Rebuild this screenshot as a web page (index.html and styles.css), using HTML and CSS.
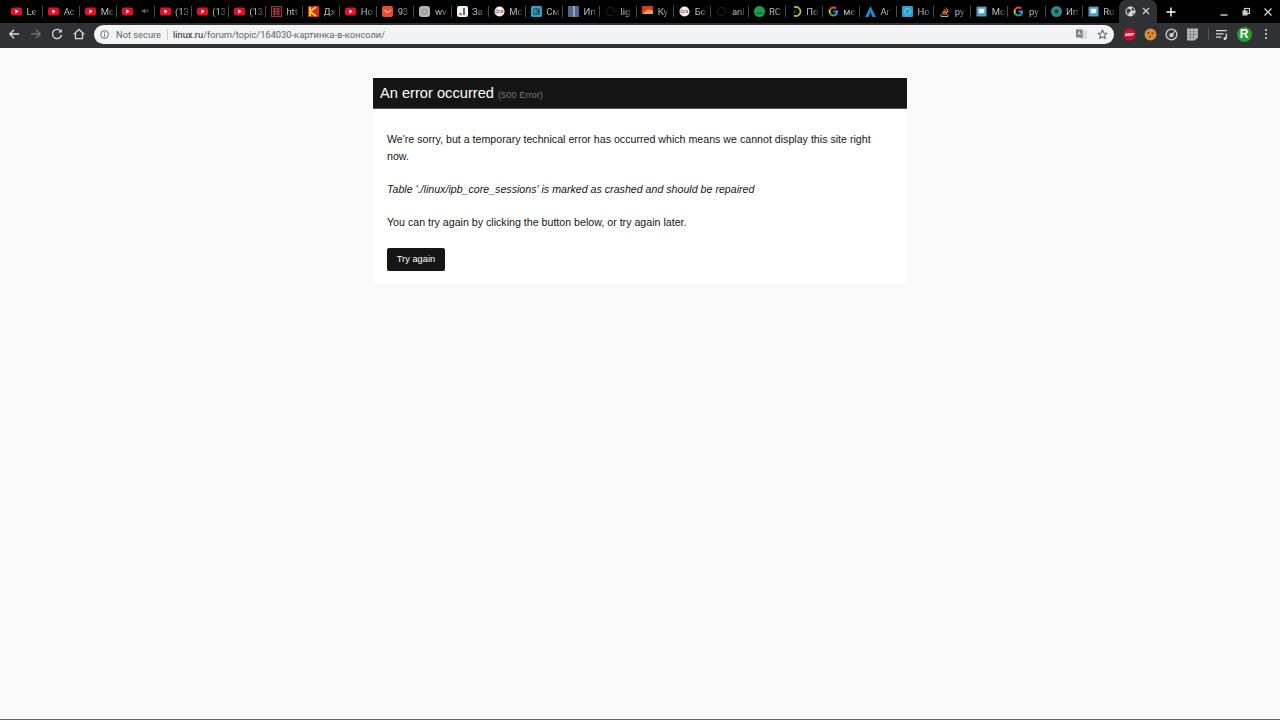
FILE: index.html
```html
<!DOCTYPE html>
<html lang="en">
<head>
<meta charset="utf-8">
<title>An error occurred</title>
<link rel="stylesheet" href="styles.css">
</head>
<body>
<svg class="defs" width="0" height="0" aria-hidden="true">
  <symbol id="yt" viewBox="0 0 11 11"><rect x="0" y="1.500" width="11" height="8" rx="2" fill="#e3102a"/><path d="M4.400 3.600v3.800l3.200-1.900z" fill="#fff"/></symbol>
  <symbol id="g" viewBox="0 0 24 24"><path d="M22 12.200c0-.8-.1-1.500-.2-2.200H12v4.200h5.600c-.2 1.300-1 2.500-2.100 3.200v2.700h3.400c2-1.800 3.100-4.600 3.100-7.900z" fill="#4285f4"/><path d="M12 23c2.900 0 5.300-1 7-2.600l-3.400-2.700c-.9.600-2.100 1-3.600 1-2.800 0-5.100-1.900-6-4.400H2.500v2.700C4.200 20.500 7.800 23 12 23z" fill="#34a853"/><path d="M6 14.300c-.5-1.500-.5-3.100 0-4.600V7H2.500c-1.500 3-1.500 7 0 10z" fill="#fbbc05"/><path d="M12 5.400c1.600 0 3 .5 4.100 1.600l3-3C17.300 2.100 14.900 1 12 1 7.800 1 4.200 3.500 2.500 7L6 9.700c.9-2.500 3.200-4.300 6-4.300z" fill="#ea4335"/></symbol>
  <symbol id="olx" viewBox="0 0 12 12"><circle cx="6" cy="6" r="5.500" fill="#f3f3f3"/><circle cx="3.500" cy="6" r="1.600" fill="none" stroke="#7b5ea7" stroke-width="1"/><path d="M6.300 4v4" stroke="#e8a33d" stroke-width="1"/><path d="M7.600 4.300l2.400 3.400M10 4.300L7.600 7.700" stroke="#d9452e" stroke-width="1"/></symbol>
  <symbol id="ring" viewBox="0 0 12 12"><circle cx="6" cy="6" r="4.500" fill="none" stroke="#1c1c1c" stroke-width="1.200"/></symbol>
  <symbol id="msg" viewBox="0 0 12 12"><rect x="0.500" y="0.500" width="11" height="11" rx="1.500" fill="#4f9ec4"/><path d="M3 3h6v4.500H6L4.500 9V7.500H3z" fill="#eef6fa"/></symbol>
</svg>

<header class="chrome">
  <div class="tabstrip">
    <div class="tab"><svg class="fav"><use href="#yt"/></svg><span class="tab-title">Le</span></div>
    <div class="tab"><svg class="fav"><use href="#yt"/></svg><span class="tab-title">Ac</span></div>
    <div class="tab"><svg class="fav"><use href="#yt"/></svg><span class="tab-title">Mc</span></div>
    <div class="tab"><svg class="fav"><use href="#yt"/></svg><svg class="mute" viewBox="0 0 10 10"><path d="M1 4h2l2.500-2v6L3 6H1z" fill="#777"/><path d="M7 3.500v3M8.500 2.500v5" stroke="#555"/></svg></div>
    <div class="tab"><svg class="fav"><use href="#yt"/></svg><span class="tab-title">(13</span></div>
    <div class="tab"><svg class="fav"><use href="#yt"/></svg><span class="tab-title">(13</span></div>
    <div class="tab"><svg class="fav"><use href="#yt"/></svg><span class="tab-title">(13</span></div>
    <div class="tab"><svg class="fav" viewBox="0 0 11 11"><rect x="0.500" y="0.500" width="10" height="10" fill="#2b0d0d" stroke="#a33"/><path d="M2 3h7M2 5.500h7M2 8h7M3.500 2v7M7 2v7" stroke="#c55" stroke-width=".7"/></svg><span class="tab-title">htt</span></div>
    <div class="tab"><svg class="fav" viewBox="0 0 11 11"><rect width="11" height="11" fill="#d32f1b"/><path d="M2 1v9M2 5.500L8 1M2 5.500L8 10" stroke="#ffd23a" stroke-width="1.800" fill="none"/></svg><span class="tab-title">Дх</span></div>
    <div class="tab"><svg class="fav"><use href="#yt"/></svg><span class="tab-title">Но</span></div>
    <div class="tab"><svg class="fav" viewBox="0 0 11 11"><rect width="11" height="11" rx="2" fill="#ee4d2d"/><path d="M3 4c.5 3 4.500 3 5 0" fill="none" stroke="#fff"/></svg><span class="tab-title">93</span></div>
    <div class="tab"><svg class="fav" viewBox="0 0 11 11"><rect width="11" height="11" rx="3" fill="#b5b5b5"/><circle cx="5.500" cy="5.500" r="2.500" fill="none" stroke="#888"/></svg><span class="tab-title">wv</span></div>
    <div class="tab"><svg class="fav" viewBox="0 0 11 11"><rect width="11" height="11" rx="2" fill="#f5f5f5"/><path d="M7 2v7" stroke="#223a8a" stroke-width="1.500"/><circle cx="3.500" cy="8" r="1.200" fill="#d8332b"/></svg><span class="tab-title">За</span></div>
    <div class="tab"><svg class="fav"><use href="#olx"/></svg><span class="tab-title">Мс</span></div>
    <div class="tab"><svg class="fav" viewBox="0 0 11 11"><rect width="11" height="11" rx="1.500" fill="#2aa5c9"/><rect x="2.500" y="2.500" width="6" height="6" fill="#0f2f3a"/><path d="M4 3v5M7.500 3L4.500 5.500 7.500 8" stroke="#4fd0ea" fill="none"/></svg><span class="tab-title">См</span></div>
    <div class="tab"><svg class="fav" viewBox="0 0 11 11"><rect width="11" height="11" fill="#4d6a8a"/><rect x="5" width="2" height="11" fill="#90a6bc"/></svg><span class="tab-title">Ип</span></div>
    <div class="tab"><svg class="fav"><use href="#ring"/></svg><span class="tab-title">lig</span></div>
    <div class="tab"><svg class="fav" viewBox="0 0 11 11"><rect width="11" height="8" fill="#d9381e"/><path d="M0 8l6-5 5 2v3z" fill="#f2a23a"/></svg><span class="tab-title">Ку</span></div>
    <div class="tab"><svg class="fav"><use href="#olx"/></svg><span class="tab-title">Бо</span></div>
    <div class="tab"><svg class="fav"><use href="#ring"/></svg><span class="tab-title">anl</span></div>
    <div class="tab"><svg class="fav" viewBox="0 0 11 11"><circle cx="5.500" cy="5.500" r="5.500" fill="#1f9d4d"/><path d="M2.500 6.500c2 1.500 4 1.500 6 0" stroke="#0a4a22" fill="none"/></svg><span class="tab-title">RC</span></div>
    <div class="tab"><svg class="fav" viewBox="0 0 11 11"><path d="M3 1.500a4.500 4.500 0 1 1 0 8" fill="none" stroke="#9ccc3c" stroke-width="1.800"/><path d="M3 4a2 2 0 0 1 0 3.500" fill="none" stroke="#5a8a20"/></svg><span class="tab-title">По</span></div>
    <div class="tab"><svg class="fav" viewBox="0 0 24 24"><use href="#g"/></svg><span class="tab-title">ме</span></div>
    <div class="tab"><svg class="fav" viewBox="0 0 11 11"><path d="M5.500 0L11 11H7.500L5.500 6 3.500 11H0z" fill="#1a8ccf"/></svg><span class="tab-title">Ar</span></div>
    <div class="tab"><svg class="fav" viewBox="0 0 11 11"><rect width="11" height="11" rx="1" fill="#2f9fd0"/><circle cx="5.500" cy="5.500" r="3" fill="none" stroke="#d7f0fa" stroke-dasharray="1 1"/></svg><span class="tab-title">Но</span></div>
    <div class="tab"><svg class="fav" viewBox="0 0 11 11"><path d="M2 8.500v2h7v-2" fill="none" stroke="#aaa"/><path d="M3 8h5M3.200 6.500l5 .6M3.800 5l4.800 1.500M5 3.300l4 2.600M7 1.500l2.500 4" stroke="#e8832a"/></svg><span class="tab-title">ру</span></div>
    <div class="tab"><svg class="fav"><use href="#msg"/></svg><span class="tab-title">Мс</span></div>
    <div class="tab"><svg class="fav" viewBox="0 0 24 24"><use href="#g"/></svg><span class="tab-title">ру</span></div>
    <div class="tab"><svg class="fav" viewBox="0 0 11 11"><circle cx="5.500" cy="5.500" r="5.500" fill="#2a8a8a"/><circle cx="5.500" cy="5.500" r="2" fill="#0d2f33"/></svg><span class="tab-title">Ип</span></div>
    <div class="tab tab-last"><svg class="fav"><use href="#msg"/></svg><span class="tab-title">Ru</span></div>
    <div class="tab tab-active">
      <svg class="fav" viewBox="0 0 11 11"><circle cx="5.500" cy="5.500" r="5" fill="#d5d6d8"/><path d="M2 2.500l3 .5 1 2-2 1.500-1 2.500-1.500-3zM7 1.500l2.500 2-1 1.500-2-1zM7.500 7l2 .5-1.500 2z" fill="#3a3b3f"/></svg>
      <svg class="tab-close" viewBox="0 0 8 8"><path d="M1 1l6 6M7 1L1 7" stroke="#d5d6d8" stroke-width="1.200"/></svg>
    </div>
    <svg class="newtab" viewBox="0 0 10 10"><path d="M5 .5v9M.5 5h9" stroke="#fff" stroke-width="1.400"/></svg>
    <div class="winctl">
      <svg viewBox="0 0 10 10"><path d="M1.500 8h7" stroke="#ccc" stroke-width="1.500"/></svg>
      <svg viewBox="0 0 10 10"><rect x="3.500" y="1.500" width="5" height="5" fill="none" stroke="#ccc" stroke-width="1.200"/><rect x="1.500" y="3.500" width="5" height="5" fill="#ccc"/></svg>
      <svg viewBox="0 0 10 10"><path d="M1.500 1.500l7 7M8.500 1.500l-7 7" stroke="#ccc" stroke-width="1.400"/></svg>
    </div>
  </div>
  <div class="toolbar">
    <svg class="nav" viewBox="0 0 12 12"><path d="M11 6H2M6 1.800L1.800 6 6 10.200" fill="none" stroke="#d8d9da" stroke-width="1.400"/></svg>
    <svg class="nav" viewBox="0 0 12 12"><path d="M1 6h9M6 1.800L10.200 6 6 10.200" fill="none" stroke="#707174" stroke-width="1.400"/></svg>
    <svg class="nav" viewBox="0 0 12 12"><path d="M10 3.500A4.600 4.600 0 1 0 10.600 7" fill="none" stroke="#d8d9da" stroke-width="1.400"/><path d="M10.800 1v3.500H7.300z" fill="#d8d9da"/></svg>
    <svg class="nav" viewBox="0 0 12 12"><path d="M.8 6.300L6 1.500l5.200 4.800M2.500 5.500v5.200h7V5.500" fill="none" stroke="#d8d9da" stroke-width="1.300"/></svg>
    <div class="omnibox">
      <svg class="info" viewBox="0 0 10 10"><circle cx="5" cy="5" r="4.300" fill="none" stroke="#5f6368"/><path d="M5 4.300v3M5 2.500v1" stroke="#5f6368"/></svg>
      <span class="secure">Not secure</span>
      <span class="omni-sep"></span>
      <span class="url"><span class="host">linux.ru</span>/forum/topic/164030-картинка-в-консоли/</span>
      <svg class="translate" viewBox="0 0 11 11"><rect x="4" y="2" width="7" height="8" fill="#d6d7d9"/><rect y="0.500" width="6.500" height="8" fill="#7b7d80"/><path d="M1.800 6l1.400-3.500L4.600 6M2.300 4.800h1.800" stroke="#fff" stroke-width=".7" fill="none"/></svg>
      <svg class="star" viewBox="0 0 12 12"><path d="M6 1.200l1.400 3.200 3.500.3-2.700 2.300.8 3.400L6 8.600 3 10.400l.8-3.400L1.100 4.700l3.500-.3z" fill="none" stroke="#5f6368" stroke-width="1.100"/></svg>
    </div>
    <div class="ext">
      <svg class="ext-icon" viewBox="0 0 12 12"><path d="M3.500 .5h5l3 3v5l-3 3h-5l-3-3v-5z" fill="#c8102e"/><text x="6" y="7.800" class="abp">ABP</text></svg>
      <svg class="ext-icon" viewBox="0 0 12 12"><circle cx="6" cy="6" r="5.500" fill="#d98c3a"/><circle cx="4" cy="4.500" r="1" fill="#7a4a1a"/><circle cx="7.800" cy="5" r="1" fill="#7a4a1a"/><circle cx="5.500" cy="8" r="1" fill="#7a4a1a"/></svg>
      <svg class="ext-icon" viewBox="0 0 12 12"><circle cx="6" cy="6" r="5" fill="#3a3b3f" stroke="#cfcfcf" stroke-width="1.200"/><circle cx="6" cy="6.500" r="2" fill="#cfcfcf"/><path d="M6 6.500L9 3" stroke="#cfcfcf"/></svg>
      <svg class="ext-icon" viewBox="0 0 12 12"><path d="M1 .5h10v8l-3 3H1z" fill="#bfc0c2"/><path d="M1 3.500h10M1 6h10M1 8.500h8M4 .5v11M7 .5v11" stroke="#6f7073" stroke-width=".6"/></svg>
      <span class="ext-sep"></span>
      <svg class="ext-icon" viewBox="0 0 12 12"><path d="M0 2.500h10M0 5.500h7M0 8.500h5" stroke="#d8d9da" stroke-width="1.200"/><path d="M9.500 5v4.500" stroke="#d8d9da" stroke-width="1.200"/><circle cx="8.300" cy="9.700" r="1.400" fill="#d8d9da"/></svg>
      <span class="avatar">R</span>
      <svg class="kebab" viewBox="0 0 4 12"><circle cx="2" cy="2" r="1.100" fill="#d8d9da"/><circle cx="2" cy="6" r="1.100" fill="#d8d9da"/><circle cx="2" cy="10" r="1.100" fill="#d8d9da"/></svg>
    </div>
  </div>
</header>

<main class="page">
  <section class="error-card">
    <h1 class="error-title">An error occurred <span class="error-code">(500 Error)</span></h1>
    <div class="error-body">
      <p class="msg">We're sorry, but a temporary technical error has occurred which means we cannot display this site right now.</p>
      <p class="msg"><em>Table './linux/ipb_core_sessions' is marked as crashed and should be repaired</em></p>
      <p class="msg">You can try again by clicking the button below, or try again later.</p>
      <a class="btn" href="#">Try again</a>
    </div>
  </section>
</main>
</body>
</html>
```

FILE: styles.css
```css
* { box-sizing: border-box; }
html, body { margin: 0; padding: 0; height: 100%; }
body {
  width: 1280px;
  height: 720px;
  overflow: hidden;
  display: flex;
  flex-direction: column;
  background: #fafafa;
  font-family: "Liberation Sans", Arial, sans-serif;
}
.defs { position: absolute; }

.chrome { flex: none; height: 48px; display: flex; flex-direction: column; background: #313235; }
.tabstrip {
  height: 23px;
  background: #000;
  display: flex;
  align-items: center;
  padding-left: 6px;
  font-family: Roboto, "Noto Sans", sans-serif;
}
.tab {
  width: 37.14px;
  height: 23px;
  flex: none;
  display: flex;
  align-items: center;
  padding: 0 0 1px 5px;
  gap: 4.500px;
  position: relative;
}
.tab::after {
  content: "";
  position: absolute;
  right: 0;
  top: 6px;
  width: 1px;
  height: 11px;
  background: #4a4b4e;
}
.tab-last::after, .tab-active::after { display: none; }
.fav { width: 11px; height: 11px; flex: none; }
.mute { width: 8px; height: 8px; flex: none; margin-left: 3px; }
.tab-title {
  font-size: 9.500px;
  color: #b9bbbe;
  white-space: nowrap;
  flex: none;
  -webkit-mask-image: linear-gradient(to right, #000 55%, rgba(0,0,0,.25));
  mask-image: linear-gradient(to right, #000 55%, rgba(0,0,0,.25));
}
.tab-active {
  width: 38px;
  margin-left: -1px;
  background: #313235;
  border-radius: 7px 7px 0 0;
  padding: 0 0 1px 6px;
  gap: 0;
}
.tab-close { width: 8px; height: 8px; margin-left: 6px; flex: none; }
.newtab { width: 10px; height: 10px; margin-left: 9px; flex: none; }
.winctl { margin-left: auto; display: flex; gap: 12px; padding-right: 7px; }
.winctl svg { width: 10px; height: 10px; }

.toolbar { flex: 1; display: flex; align-items: center; padding: 0 10px 3px 8px; }
.nav { width: 12px; height: 12px; flex: none; margin-right: 9.500px; }
.omnibox {
  width: 1020px;
  height: 19px;
  flex: none;
  background: #f1f3f4;
  border-radius: 10px;
  display: flex;
  align-items: center;
  padding: 0 6px 0 6px;
  font-family: Roboto, "Noto Sans", sans-serif;
  font-size: 9.300px;
}
.info { width: 9px; height: 9px; flex: none; }
.secure { color: #5f6368; margin-left: 7px; }
.omni-sep { width: 1px; height: 11px; background: #c8cacc; margin: 0 5px 0 6px; }
.url { color: #5f6368; flex: 1; }
.host { color: #202124; }
.translate { width: 11px; height: 11px; flex: none; }
.star { width: 11px; height: 11px; flex: none; margin-left: 10px; }
.ext { display: flex; align-items: center; margin-left: 8.500px; flex: 1; }
.ext-icon { width: 13px; height: 13px; flex: none; margin-right: 8px; }
.abp { font: bold 4px "Liberation Sans", sans-serif; fill: #fff; text-anchor: middle; }
.ext-sep { width: 1px; height: 12px; background: #55565a; margin: 0 7px 0 1px; }
.avatar {
  width: 15px;
  height: 15px;
  border-radius: 50%;
  background: #2a9d2f;
  color: #fff;
  font: bold 12px/15px "Liberation Sans", sans-serif;
  text-align: center;
  flex: none;
}
.kebab { width: 4px; height: 12px; margin-left: 12px; flex: none; }

.page {
  flex: 1;
  min-height: 0;
  padding-top: 30px;
  display: flex;
  justify-content: center;
  align-items: flex-start;
  border-bottom: 1px solid #666;
}
.error-card { width: 534px; background: #fff; }
.error-title {
  margin: 0;
  height: 31px;
  padding: 0 7px;
  background: #151515;
  border-bottom: 1px solid #555;
  color: #fff;
  font-size: 14.650px;
  font-weight: normal;
  line-height: 30px;
}
.error-code { font-size: 9.300px; color: #777; }
.error-body { padding: 22px 14px 13px; color: #151515; font-size: 10.650px; line-height: 16.700px; }
.msg { margin: 0 0 16.700px; }
.msg:nth-of-type(3) { margin-bottom: 17px; }
.btn {
  display: inline-block;
  width: 58px;
  height: 23px;
  background: #151515;
  border-radius: 2px;
  color: #fff;
  font-size: 9.300px;
  line-height: 23px;
  text-align: center;
  text-decoration: none;
  vertical-align: top;
}
```
